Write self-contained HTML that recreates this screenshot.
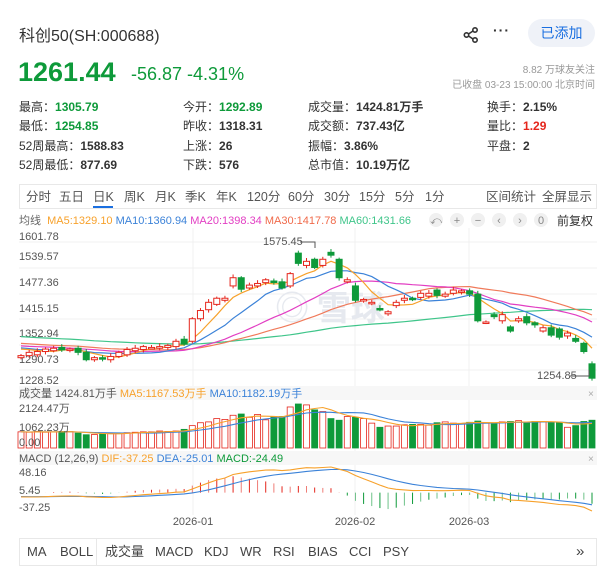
<!DOCTYPE html><html><head><meta charset="utf-8"><style>
*{margin:0;padding:0;box-sizing:border-box}
body{width:611px;height:568px;background:#fff;font-family:"Liberation Sans","Noto Sans CJK SC",sans-serif;color:#333;position:relative;overflow:hidden}
.a{position:absolute;white-space:nowrap}
.g{color:#0e9a3a}.r{color:#e5261c}.b{color:#1a6fe0}
.st{font-size:12px;color:#333}.st b{font-weight:bold}
.tab{font-size:12.5px;color:#555;top:189px;line-height:16px}
.bt{font-size:13px;color:#444;top:543px;line-height:17px}
</style></head><body>
<div class="a" style="left:19px;top:22px;font-size:16px;color:#333">科创50(SH:000688)</div>
<svg class="a" style="left:462px;top:26px" width="18" height="18" viewBox="0 0 18 18"><circle cx="13" cy="4" r="2.2" fill="none" stroke="#333" stroke-width="1.6"/><circle cx="4.5" cy="9" r="2.2" fill="none" stroke="#333" stroke-width="1.6"/><circle cx="13" cy="14" r="2.2" fill="none" stroke="#333" stroke-width="1.6"/><path d="M6.5 8 L11 5 M6.5 10 L11 13" stroke="#333" stroke-width="1.6"/></svg>
<div class="a" style="left:493px;top:22px;font-size:14px;font-weight:bold;color:#333;letter-spacing:1px">···</div>
<div class="a" style="left:528px;top:19px;width:67px;height:28px;border-radius:14px;background:#eff2f8;color:#1a6fe0;font-size:14px;text-align:center;line-height:28px">已添加</div>
<div class="a g" style="left:18px;top:57px;font-size:27px;font-weight:bold">1261.44</div>
<div class="a g" style="left:131px;top:64px;font-size:18px">-56.87 -4.31%</div>
<div class="a" style="right:16px;top:61px;font-size:10px;color:#999">8.82 万球友关注</div>
<div class="a" style="right:16px;top:76px;font-size:10px;color:#999">已收盘 03-23 15:00:00 北京时间</div>
<div class="a st" style="left:19px;top:98px">最高：<b class="g">1305.79</b></div>
<div class="a st" style="left:19px;top:117px">最低：<b class="g">1254.85</b></div>
<div class="a st" style="left:19px;top:137px">52周最高：<b>1588.83</b></div>
<div class="a st" style="left:19px;top:156px">52周最低：<b>877.69</b></div>
<div class="a st" style="left:183px;top:98px">今开：<b class="g">1292.89</b></div>
<div class="a st" style="left:183px;top:117px">昨收：<b>1318.31</b></div>
<div class="a st" style="left:183px;top:137px">上涨：<b>26</b></div>
<div class="a st" style="left:183px;top:156px">下跌：<b>576</b></div>
<div class="a st" style="left:308px;top:98px">成交量：<b>1424.81万手</b></div>
<div class="a st" style="left:308px;top:117px">成交额：<b>737.43亿</b></div>
<div class="a st" style="left:308px;top:137px">振幅：<b>3.86%</b></div>
<div class="a st" style="left:308px;top:156px">总市值：<b>10.19万亿</b></div>
<div class="a st" style="left:487px;top:98px">换手：<b>2.15%</b></div>
<div class="a st" style="left:487px;top:117px">量比：<b class="r">1.29</b></div>
<div class="a st" style="left:487px;top:137px">平盘：<b>2</b></div>
<div class="a" style="left:19px;top:184px;width:578px;height:25px;border:1px solid #e8e8e8"></div>
<div class="a tab" style="left:26px">分时</div><div class="a tab" style="left:59px">五日</div>
<div class="a tab b" style="left:93px">日K</div><div class="a" style="left:93px;top:206px;width:20px;height:2px;background:#1a6fe0"></div>
<div class="a tab" style="left:124px">周K</div><div class="a tab" style="left:155px">月K</div><div class="a tab" style="left:185px">季K</div><div class="a tab" style="left:216px">年K</div><div class="a tab" style="left:247px">120分</div><div class="a tab" style="left:288px">60分</div><div class="a tab" style="left:324px">30分</div><div class="a tab" style="left:359px">15分</div><div class="a tab" style="left:395px">5分</div><div class="a tab" style="left:425px">1分</div>
<div class="a tab b" style="left:486px">区间统计</div><div class="a tab b" style="left:542px">全屏显示</div>
<div class="a" style="left:19px;top:212px;font-size:11px;color:#666">均线 <span style="color:#f7a12b">&nbsp;MA5:1329.10</span> <span style="color:#3b82d8">MA10:1360.94</span> <span style="color:#e23ec3">MA20:1398.34</span> <span style="color:#f06a4a">MA30:1417.78</span> <span style="color:#3fc58a">MA60:1431.66</span></div>
<div class="a" style="left:557px;top:212px;font-size:12px;color:#333">前复权</div>
<svg class="a" style="left:0;top:0" width="611" height="568" id="ch"></svg>
<div class="a" style="left:19px;top:538px;width:578px;height:28px;border:1px solid #e8e8e8"></div>
<div class="a" style="left:96px;top:539px;width:1px;height:27px;background:#e8e8e8"></div>
<div class="a bt b" style="left:27px">MA</div><div class="a bt" style="left:60px">BOLL</div><div class="a bt b" style="left:105px">成交量</div><div class="a bt b" style="left:155px">MACD</div><div class="a bt" style="left:204px">KDJ</div><div class="a bt" style="left:240px">WR</div><div class="a bt" style="left:273px">RSI</div><div class="a bt" style="left:308px">BIAS</div><div class="a bt" style="left:349px">CCI</div><div class="a bt" style="left:383px">PSY</div><div class="a bt" style="left:576px;font-size:15px">»</div>
<script>
var svg=document.getElementById('ch'),out='';
function L(s){out+=s}
[436,457,478,499,520,541].forEach(function(x,i){L('<circle cx="'+x+'" cy="220" r="7" fill="#f0f0f0"/><text x="'+x+'" y="224" font-size="11" fill="#888" text-anchor="middle">'+['⤺','+','−','‹','›','0'][i]+'</text>')});
[236,262,288,313,339,364].forEach(function(y){L('<line x1="19" x2="597" y1="'+(y+6)+'" y2="'+(y+6)+'" stroke="#f0f0f0"/>')});
[193,355,469].forEach(function(x){L('<line x1="'+x+'" x2="'+x+'" y1="228" y2="515" stroke="#f0f0f0"/>')});
L('<rect x="19" y="386" width="578" height="14" fill="#f7f7f7"/><rect x="19" y="451" width="578" height="14" fill="#f7f7f7"/>');
L('<text x="330" y="320" font-size="34" fill="#e6e9ef" text-anchor="middle" font-family="Noto Sans CJK SC,sans-serif" font-weight="bold">◎ 雪球</text>');
var pl=[['1601.78',240],['1539.57',260],['1477.36',286],['1415.15',312],['1352.94',337],['1290.73',363],['1228.52',384]];
pl.forEach(function(p){L('<text x="19" y="'+p[1]+'" font-size="11" fill="#555">'+p[0]+'</text>')});
var C=[[1305,1310],[1310,1318],[1312,1320],[1320,1326],[1322,1328],[1330,1324],[1324,1326],[1328,1318],[1318,1300],[1300,1305],[1305,1302],[1300,1308],[1308,1318],[1312,1325],[1322,1328],[1325,1332],[1330,1330],[1328,1332],[1330,1335],[1332,1345],[1350,1338],[1345,1400],[1400,1420],[1422,1440],[1435,1450],[1445,1450],[1480,1500],[1500,1472],[1475,1482],[1480,1486],[1488,1495],[1492,1490],[1490,1475],[1480,1510],[1560,1535],[1530,1540],[1545,1525],[1530,1545],[1562,1555],[1545,1500],[1490,1495],[1480,1445],[1445,1447],[1440,1440],[1425,1422],[1412,1417],[1432,1440],[1445,1450],[1450,1447],[1452,1462],[1455,1462],[1470,1457],[1455,1460],[1462,1470],[1465,1468],[1468,1460],[1460,1395],[1392,1392],[1410,1405],[1395,1410],[1380,1370],[1395,1400],[1405,1390],[1390,1385],[1370,1378],[1378,1360],[1375,1355],[1358,1365],[1352,1345],[1340,1320],[1290,1255]];
var n=C.length,x0=21,dx=(592-21)/(n-1);
function Y(p){return 236+(1601.78-p)*0.41}
var cl=[];for(var i=0;i<60;i++)cl.push(1390-i*1.1+Math.sin(i)*8);
C.forEach(function(c){cl.push(c[1])});
function ma(k){var r=[];for(var i=60;i<cl.length;i++){var s=0;for(var j=0;j<k;j++)s+=cl[i-j];r.push(s/k)}return r}
[[60,'#3fc58a'],[30,'#f07a5a'],[20,'#e23ec3'],[10,'#3b82d8'],[5,'#f7a12b']].forEach(function(m){var a=ma(m[0]),d='';a.forEach(function(v,i){d+=(i?'L':'M')+(x0+i*dx).toFixed(1)+' '+Y(v).toFixed(1)});L('<path d="'+d+'" fill="none" stroke="'+m[1]+'" stroke-width="1.2"/>')});
C.forEach(function(c,i){var x=x0+i*dx,o=c[0],k=c[1],up=k>=o,col=up?'#e5261c':'#0e9a3a',hi=Math.max(o,k)+4+(i%3)*2,lo=Math.min(o,k)-4-(i%4);
L('<line x1="'+x+'" x2="'+x+'" y1="'+Y(hi)+'" y2="'+Y(lo)+'" stroke="'+col+'"/>');
var t=Y(Math.max(o,k)),h=Math.max(1.5,Y(Math.min(o,k))-t);
L('<rect x="'+(x-3)+'" y="'+t+'" width="6" height="'+h+'" fill="'+(up?'#fff':col)+'" stroke="'+col+'"/>')});
L('<path d="M300 242 H315 V248" stroke="#555" fill="none"/><text x="263" y="245" font-size="11" fill="#555">1575.45</text>');
L('<path d="M570 376 H589 V370" stroke="#555" fill="none"/><text x="537" y="379" font-size="11" fill="#555">1254.85</text>');
L('<text x="19" y="397" font-size="11" fill="#555">成交量 1424.81万手 <tspan fill="#f7a12b"> MA5:1167.53万手</tspan> <tspan fill="#3b82d8">MA10:1182.19万手</tspan></text>');
L('<text x="588" y="397" font-size="10" fill="#aaa">×</text><text x="588" y="462" font-size="10" fill="#aaa">×</text>');
var V=[780,760,800,760,780,800,790,720,640,650,700,720,720,740,760,780,780,820,800,820,900,1080,1220,1260,1420,1380,1580,1640,1480,1620,1360,1520,1520,1980,2124,2080,1840,1760,1420,1340,1520,1480,1420,1200,1000,1060,1060,1120,1140,1140,1100,1220,1260,1200,1180,1240,1300,1200,1180,1260,1280,1320,1240,1280,1260,1240,1220,1000,1080,1280,1340];
var vb=448,vs=44/2124;
V.forEach(function(v,i){var x=x0+i*dx,up=C[i][1]>=C[i][0],col=up?'#e5261c':'#0e9a3a',h=v*vs;L('<rect x="'+(x-3)+'" y="'+(vb-h)+'" width="6" height="'+h+'" fill="'+(up?'#fff':col)+'" stroke="'+col+'" stroke-width="0.8"/>')});
function vma(k){var d='';V.forEach(function(v,i){var s=0,c=0;for(var j=0;j<k&&i-j>=0;j++){s+=V[i-j];c++}d+=(i?'L':'M')+(x0+i*dx).toFixed(1)+' '+(vb-s/c*vs).toFixed(1)});return d}
L('<path d="'+vma(10)+'" fill="none" stroke="#3b82d8" stroke-width="1.1"/><path d="'+vma(5)+'" fill="none" stroke="#f7a12b" stroke-width="1.1"/>');
L('<text x="19" y="412" font-size="11" fill="#555">2124.47万</text><text x="19" y="431" font-size="11" fill="#555">1062.23万</text><text x="19" y="446" font-size="11" fill="#555">0.00</text>');
L('<text x="19" y="462" font-size="11" fill="#555">MACD (12,26,9) <tspan fill="#f7a12b"> DIF:-37.25</tspan> <tspan fill="#3b82d8">DEA:-25.01</tspan> <tspan fill="#0e9a3a">MACD:-24.49</tspan></text>');
var e12=cl[0],e26=cl[0],dea=0,D=[],E=[];
cl.forEach(function(c,i){e12=e12+(c-e12)*2/13;e26=e26+(c-e26)*2/27;var dif=e12-e26;dea=dea+(dif-dea)*0.2;if(i>=60){D.push(dif);E.push(dea)}});
var mx=0,mn=0;D.forEach(function(v){mx=Math.max(mx,v);mn=Math.min(mn,v)});
var lo0=D[0];
// map: max -> 467, min -> 511
function MY(v){return 467+(mx-v)*(44/(mx-mn))}
function HY(h){return MY(0)-h*(44/(mx-mn))*0.9}
var d1='',d2='';D.forEach(function(v,i){var x=x0+i*dx;d1+=(i?'L':'M')+x.toFixed(1)+' '+MY(v).toFixed(1);d2+=(i?'L':'M')+x.toFixed(1)+' '+MY(E[i]).toFixed(1);var h=(v-E[i])*2;var col=h>=0?'#e5261c':'#0e9a3a';L('<line x1="'+x+'" x2="'+x+'" y1="'+MY(0)+'" y2="'+HY(h)+'" stroke="'+col+'" stroke-opacity="'+(i%2?0.6:1)+'"/>')});
L('<path d="'+d2+'" fill="none" stroke="#3b82d8" stroke-width="1.1"/><path d="'+d1+'" fill="none" stroke="#f7a12b" stroke-width="1.1"/>');
L('<text x="19" y="476" font-size="11" fill="#555">48.16</text><text x="19" y="494" font-size="11" fill="#555">5.45</text><text x="19" y="511" font-size="11" fill="#555">-37.25</text>');
L('<text x="193" y="525" font-size="11" fill="#555" text-anchor="middle">2026-01</text><text x="355" y="525" font-size="11" fill="#555" text-anchor="middle">2026-02</text><text x="469" y="525" font-size="11" fill="#555" text-anchor="middle">2026-03</text>');
svg.innerHTML=out;
</script>
</body></html>
